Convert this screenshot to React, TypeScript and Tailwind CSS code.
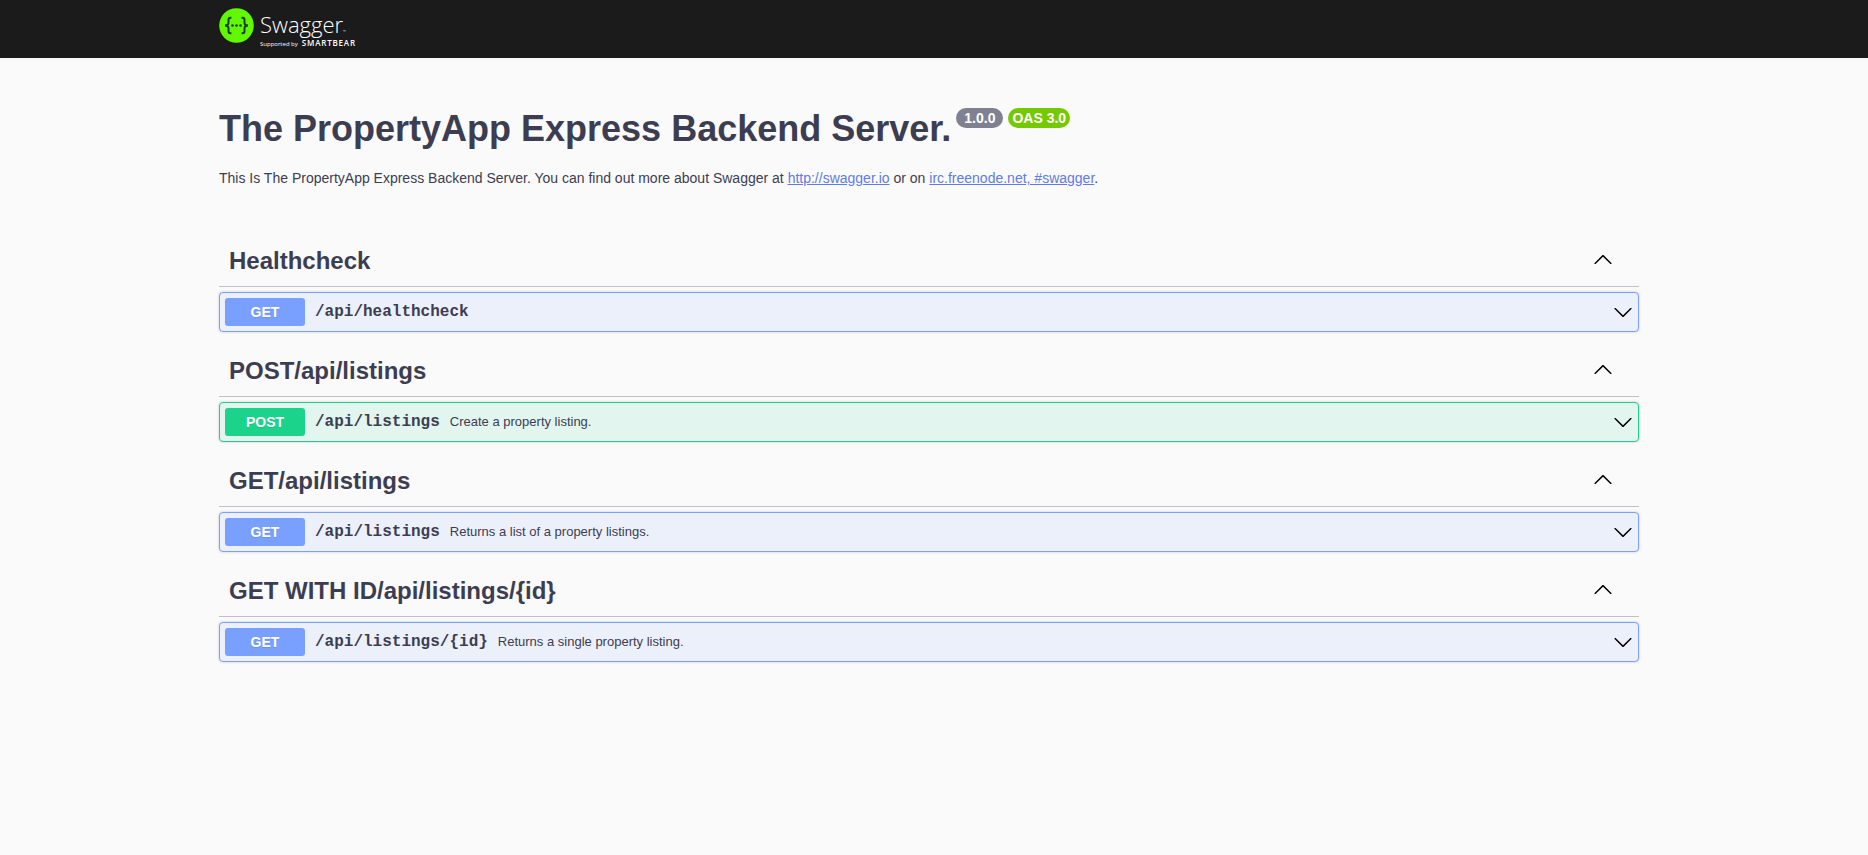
import { useState } from "react";

type Method = "GET" | "POST";

interface Operation {
  method: Method;
  path: string;
  summary?: string;
}

interface Tag {
  name: string;
  operations: Operation[];
}

const tags: Tag[] = [
  { name: "Healthcheck", operations: [{ method: "GET", path: "/api/healthcheck" }] },
  {
    name: "POST/api/listings",
    operations: [{ method: "POST", path: "/api/listings", summary: "Create a property listing." }],
  },
  {
    name: "GET/api/listings",
    operations: [{ method: "GET", path: "/api/listings", summary: "Returns a list of a property listings." }],
  },
  {
    name: "GET WITH ID/api/listings/{id}",
    operations: [{ method: "GET", path: "/api/listings/{id}", summary: "Returns a single property listing." }],
  },
];

const blockStyles: Record<Method, string> = {
  GET: "border-[#799fff] bg-[#ecf0fb]",
  POST: "border-[#1bd28a] bg-[#e2f5ee]",
};

const badgeStyles: Record<Method, string> = {
  GET: "bg-[#799fff]",
  POST: "bg-[#1bd38b]",
};

function ArrowUp() {
  return (
    <svg viewBox="0 0 20 20" className="size-5 fill-black" aria-hidden="true">
      <path d="M17.418 14.908c.272.268.709.268.979 0s.271-.701 0-.969l-7.908-7.83c-.27-.268-.707-.268-.979 0l-7.908 7.83c-.27.268-.27.701 0 .969s.709.268.979 0L10 7.767l7.418 7.141z" />
    </svg>
  );
}

function ArrowDown() {
  return (
    <svg viewBox="0 0 20 20" className="size-5 fill-black" aria-hidden="true">
      <path d="M17.418 6.109c.272-.268.709-.268.979 0s.271.701 0 .969l-7.908 7.83c-.27.268-.707.268-.979 0l-7.908-7.83c-.27-.268-.27-.701 0-.969s.709-.268.979 0L10 13.25l7.418-7.141z" />
    </svg>
  );
}

function Logo() {
  return (
    <a href="#" aria-label="Swagger" className="flex w-fit items-start gap-1.5 font-['Open_Sans',sans-serif] text-white">
      <svg viewBox="0 0 35 35" className="size-[35px]" aria-hidden="true">
        <circle cx="17.5" cy="17.5" r="17.3" fill="#62f900" />
        <g fill="none" stroke="#1c3a3c" strokeWidth="2">
          <path d="M12.4 9.8h-.9c-1.5 0-2 .8-2 2.2v2.7c0 1.6-.6 2.5-2.4 2.6v.4c1.8.1 2.4 1 2.4 2.6V23c0 1.4.5 2.2 2 2.2h.9" />
          <path d="M22.6 9.8h.9c1.5 0 2 .8 2 2.2v2.7c0 1.6.6 2.5 2.4 2.6v.4c-1.8.1-2.4 1-2.4 2.6V23c0 1.4-.5 2.2-2 2.2h-.9" />
        </g>
        <g fill="#1c3a3c">
          <circle cx="13.5" cy="17.5" r="1.3" />
          <circle cx="17.5" cy="17.5" r="1.3" />
          <circle cx="21.5" cy="17.5" r="1.3" />
        </g>
      </svg>
      <span className="flex flex-col pt-0.5">
        <span className="flex items-end text-[22px] leading-[28px] font-light">
          Swagger<span className="text-[4px] leading-[12px]">™</span>
        </span>
        <span className="flex items-baseline gap-1 leading-[10px]">
          <span className="text-[6px]">Supported by</span>
          <span className="text-[8px] font-semibold tracking-widest">SMARTBEAR</span>
        </span>
      </span>
    </a>
  );
}

function OperationRow({ method, path, summary }: Operation) {
  return (
    <button
      type="button"
      className={`mb-[15px] flex w-full items-center gap-2.5 rounded border p-[5px] text-left shadow-[0_0_3px_rgba(0,0,0,0.19)] ${blockStyles[method]}`}
    >
      <span
        className={`w-20 rounded-[3px] text-center text-sm leading-7 font-bold text-white [text-shadow:0_1px_0_rgba(0,0,0,0.1)] ${badgeStyles[method]}`}
      >
        {method}
      </span>
      <span className="font-['Liberation_Mono',monospace] text-base leading-6 font-bold">{path}</span>
      <span className="flex-1 text-[13px] leading-5">{summary}</span>
      <ArrowDown />
    </button>
  );
}

function TagSection({ name, operations }: Tag) {
  const [open, setOpen] = useState(true);
  return (
    <section>
      <div className="mb-[5px] flex h-[50px] items-center justify-between border-b border-[#c0c0c8] pr-5 pb-0.5 pl-2.5">
        <h2 className="text-2xl leading-7 font-bold">{name}</h2>
        <button
          type="button"
          aria-expanded={open}
          aria-label={open ? "Collapse operation" : "Expand operation"}
          className="px-1.5 pb-1"
          onClick={() => setOpen(!open)}
        >
          {open ? <ArrowUp /> : <ArrowDown />}
        </button>
      </div>
      {open && operations.map((op) => <OperationRow key={op.method + op.path} {...op} />)}
    </section>
  );
}

export default function App() {
  return (
    <div className="min-h-screen bg-[#fafafa] font-['Liberation_Sans',Arial,sans-serif] text-[#3d3d51]">
      <header className="bg-[#1b1b1b] pr-2.5">
        <div className="mx-auto h-[58px] max-w-[1460px] px-5 pt-2">
          <Logo />
        </div>
      </header>
      <main className="pr-2.5">
        <div className="mx-auto max-w-[1460px] px-5 pt-[50px]">
          <div className="flex items-start gap-[5px]">
            <h1 className="text-4xl leading-[42px] font-bold">The PropertyApp Express Backend Server.</h1>
            <span className="rounded-full bg-[#7f8193] px-2 text-sm leading-5 font-bold text-white">1.0.0</span>
            <span className="rounded-full bg-[#74c900] px-1 text-sm leading-5 font-bold text-white">OAS 3.0</span>
          </div>
          <p className="mt-[18px] mb-[49px] text-sm leading-5">
            This Is The PropertyApp Express Backend Server. You can find out more about Swagger at{" "}
            <a href="http://swagger.io" className="text-[#5f7be6] underline">
              http://swagger.io
            </a>{" "}
            or on{" "}
            <a href="http://swagger.io/irc/" className="text-[#5f7be6] underline">
              irc.freenode.net, #swagger
            </a>
            .
          </p>
          {tags.map((tag) => (
            <TagSection key={tag.name} {...tag} />
          ))}
        </div>
      </main>
    </div>
  );
}
